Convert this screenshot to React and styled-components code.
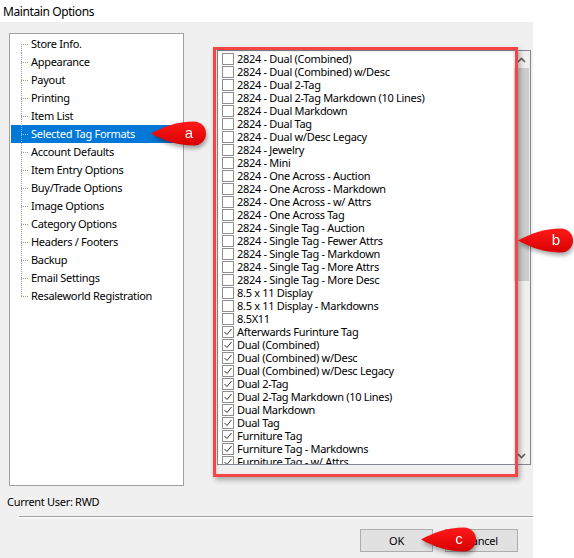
import React from 'react'
import styled, { createGlobalStyle } from 'styled-components'

const GlobalStyle = createGlobalStyle`
  html, body {
    margin: 0;
    padding: 0;
    background: #fff;
  }
  body {
    font-family: "Segoe UI", "Noto Sans", "Liberation Sans", sans-serif;
    font-size: 11px;
    color: #000;
  }
`

const UI_FONT = `"Segoe UI", "Noto Sans", "Liberation Sans", sans-serif`

const Page = styled.div`
  position: relative;
  width: 574px;
  height: 558px;
  overflow: hidden;
`

const Window = styled.div`
  width: 533px;
  height: 558px;
  display: flex;
  flex-direction: column;
  background: #f0f0f0;
`

const TitleBar = styled.div`
  height: 22px;
  flex: none;
  background: #fff;
  display: flex;
  align-items: center;
  padding-left: 3px;
  font-family: ${UI_FONT};
  font-size: 12px;
  letter-spacing: -0.4px;
`

const Main = styled.div`
  display: flex;
  align-items: flex-start;
  padding: 11px 0 0 9px;
  gap: 33px;
`

const TreePanel = styled.div`
  width: 175px;
  height: 453px;
  box-sizing: border-box;
  border: 1px solid #a0a0a0;
  background: #fff;
  padding-top: 1px;
`

const dotsDown = (color) => `repeating-linear-gradient(to bottom, ${color} 0 1px, transparent 1px 2px)`
const dotsRight = (color) => `repeating-linear-gradient(to right, ${color} 0 1px, transparent 1px 2px)`

const TreeItem = styled.div`
  height: 18px;
  line-height: 18px;
  margin-left: 1px;
  width: 172px;
  padding-left: 20px;
  box-sizing: border-box;
  white-space: nowrap;
  font-family: ${UI_FONT};
  font-size: 11px;
  letter-spacing: -0.3px;
  color: ${p => (p.$selected ? '#fff' : '#000')};
  background-color: ${p => (p.$selected ? '#0078d7' : 'transparent')};
  background-image: ${p => {
    const c = p.$selected ? '#8fc0ec' : '#a0a0a0'
    return `${dotsRight(c)}, ${dotsDown(c)}`
  }};
  background-repeat: no-repeat;
  background-size: 8px 1px, 1px ${p => (p.$first || p.$last ? '9px' : '18px')};
  background-position: 10px 9px, 10px ${p => (p.$first ? '9px' : '0')};
`

const ListBox = styled.div`
  margin-top: 17px;
  width: 314px;
  height: 415px;
  box-sizing: border-box;
  border: 1px solid #828790;
  background: #fff;
  display: flex;
  overflow: hidden;
`

const Rows = styled.div`
  flex: 1;
  padding: 1px 0 0 4px;
  overflow: hidden;
`

const Row = styled.div`
  height: 13px;
  display: flex;
  align-items: center;
  gap: 3px;
  white-space: nowrap;
  font-family: ${UI_FONT};
  font-size: 11px;
  letter-spacing: -0.3px;
  line-height: 13px;
`

const Box = styled.span`
  width: 12px;
  height: 12px;
  flex: none;
  box-sizing: border-box;
  border: 1px solid #8f8f8f;
  background: #fff;
  display: flex;
  align-items: center;
  justify-content: center;
`

const ScrollBar = styled.div`
  width: 17px;
  flex: none;
  background: #f0f0f0;
  display: flex;
  flex-direction: column;
`

const ScrollArrow = styled.div`
  height: 17px;
  flex: none;
  display: flex;
  align-items: center;
  justify-content: center;
`

const Thumb = styled.div`
  height: 213px;
  margin: 0 1px;
  background: #cdcdcd;
`

const Track = styled.div`
  flex: 1;
`

const Footer = styled.div`
  display: flex;
  flex-direction: column;
`

const UserLine = styled.div`
  margin-top: 8px;
  padding-left: 7px;
  height: 16px;
  line-height: 16px;
  font-family: ${UI_FONT};
  font-size: 11px;
  letter-spacing: -0.3px;
`

const Separator = styled.div`
  margin: 6px 0 0 19px;
  height: 1px;
  background: #a0a0a0;
  border-bottom: 1px solid #fff;
`

const Buttons = styled.div`
  margin-top: 11px;
  display: flex;
  justify-content: flex-end;
  gap: 12px;
  padding-right: 15px;
`

const Button = styled.button`
  width: 73px;
  height: 23px;
  box-sizing: border-box;
  border: 1px solid #adadad;
  background: #e1e1e1;
  font-family: ${UI_FONT};
  font-size: 11px;
  letter-spacing: -0.2px;
  color: #000;
  padding: 0;
`

const Highlight = styled.div`
  position: absolute;
  left: 213px;
  top: 47px;
  width: 305px;
  height: 430px;
  box-sizing: border-box;
  border: 3px solid #f54545;
  box-shadow: 2px 3px 5px rgba(0, 0, 0, 0.3), inset 1px 1px 3px rgba(0, 0, 0, 0.15);
  pointer-events: none;
`

const Callout = styled.div`
  position: absolute;
  left: ${p => p.$x}px;
  top: ${p => p.$y}px;
  width: 56px;
  height: 25px;
  filter: drop-shadow(1px 3px 2px rgba(0, 0, 0, 0.35));
`

const CalloutLabel = styled.span`
  position: absolute;
  left: 27px;
  top: 0;
  width: 22px;
  height: 25px;
  line-height: 24px;
  text-align: center;
  color: #fff;
  font-family: "Liberation Sans", Arial, sans-serif;
  font-size: 15px;
`

const tree = [
  'Store Info.', 'Appearance', 'Payout', 'Printing', 'Item List',
  'Selected Tag Formats', 'Account Defaults', 'Item Entry Options',
  'Buy/Trade Options', 'Image Options', 'Category Options',
  'Headers / Footers', 'Backup', 'Email Settings', 'Resaleworld Registration'
]

const formats = [
  ['2824 - Dual (Combined)', false],
  ['2824 - Dual (Combined) w/Desc', false],
  ['2824 - Dual 2-Tag', false],
  ['2824 - Dual 2-Tag Markdown (10 Lines)', false],
  ['2824 - Dual Markdown', false],
  ['2824 - Dual Tag', false],
  ['2824 - Dual w/Desc Legacy', false],
  ['2824 - Jewelry', false],
  ['2824 - Mini', false],
  ['2824 - One Across - Auction', false],
  ['2824 - One Across - Markdown', false],
  ['2824 - One Across - w/ Attrs', false],
  ['2824 - One Across Tag', false],
  ['2824 - Single Tag - Auction', false],
  ['2824 - Single Tag - Fewer Attrs', false],
  ['2824 - Single Tag - Markdown', false],
  ['2824 - Single Tag - More Attrs', false],
  ['2824 - Single Tag - More Desc', false],
  ['8.5 x 11 Display', false],
  ['8.5 x 11 Display - Markdowns', false],
  ['8.5X11', false],
  ['Afterwards Furinture Tag', true],
  ['Dual (Combined)', true],
  ['Dual (Combined) w/Desc', true],
  ['Dual (Combined) w/Desc Legacy', true],
  ['Dual 2-Tag', true],
  ['Dual 2-Tag Markdown (10 Lines)', true],
  ['Dual Markdown', true],
  ['Dual Tag', true],
  ['Furniture Tag', true],
  ['Furniture Tag - Markdowns', true],
  ['Furniture Tag - w/ Attrs', true]
]

function Check () {
  return (
    <svg width='10' height='10' viewBox='0 0 10 10'>
      <path d='M1.5 5 L4 7.5 L8.5 2' fill='none' stroke='#333' strokeWidth='1' />
    </svg>
  )
}

function Chevron ({ up }) {
  return (
    <svg width='9' height='6' viewBox='0 0 9 6'>
      <path
        d={up ? 'M1 5 L4.5 1.5 L8 5' : 'M1 1 L4.5 4.5 L8 1'}
        fill='none'
        stroke='#606060'
        strokeWidth='1.6'
      />
    </svg>
  )
}

function Marker ({ x, y, label }) {
  return (
    <Callout $x={x} $y={y}>
      <svg width='56' height='25' viewBox='0 0 56 25'>
        <defs>
          <linearGradient id={`grad-${label}`} x1='0' y1='0' x2='0' y2='1'>
            <stop offset='0' stopColor='#ff1a1a' />
            <stop offset='1' stopColor='#d80000' />
          </linearGradient>
        </defs>
        <path
          d='M0 12.5 C12 6 26 0.5 43 0.5 A12 12 0 0 1 43 24.5 C26 24.5 12 19 0 12.5 Z'
          fill={`url(#grad-${label})`}
        />
      </svg>
      <CalloutLabel>{label}</CalloutLabel>
    </Callout>
  )
}

export default function App () {
  return (
    <Page>
      <GlobalStyle />
      <Window>
        <TitleBar>Maintain Options</TitleBar>
        <Main>
          <TreePanel>
            {tree.map((name, i) => (
              <TreeItem
                key={name}
                $selected={name === 'Selected Tag Formats'}
                $first={i === 0}
                $last={i === tree.length - 1}
              >
                {name}
              </TreeItem>
            ))}
          </TreePanel>
          <ListBox>
            <Rows>
              {formats.map(([name, checked]) => (
                <Row key={name}>
                  <Box>{checked && <Check />}</Box>
                  {name}
                </Row>
              ))}
            </Rows>
            <ScrollBar>
              <ScrollArrow><Chevron up /></ScrollArrow>
              <Thumb />
              <Track />
              <ScrollArrow><Chevron /></ScrollArrow>
            </ScrollBar>
          </ListBox>
        </Main>
        <Footer>
          <UserLine>Current User: RWD</UserLine>
          <Separator />
          <Buttons>
            <Button>OK</Button>
            <Button>Cancel</Button>
          </Buttons>
        </Footer>
      </Window>
      <Highlight />
      <Marker x={151} y={121} label='a' />
      <Marker x={518} y={228} label='b' />
      <Marker x={421} y={527} label='c' />
    </Page>
  )
}
